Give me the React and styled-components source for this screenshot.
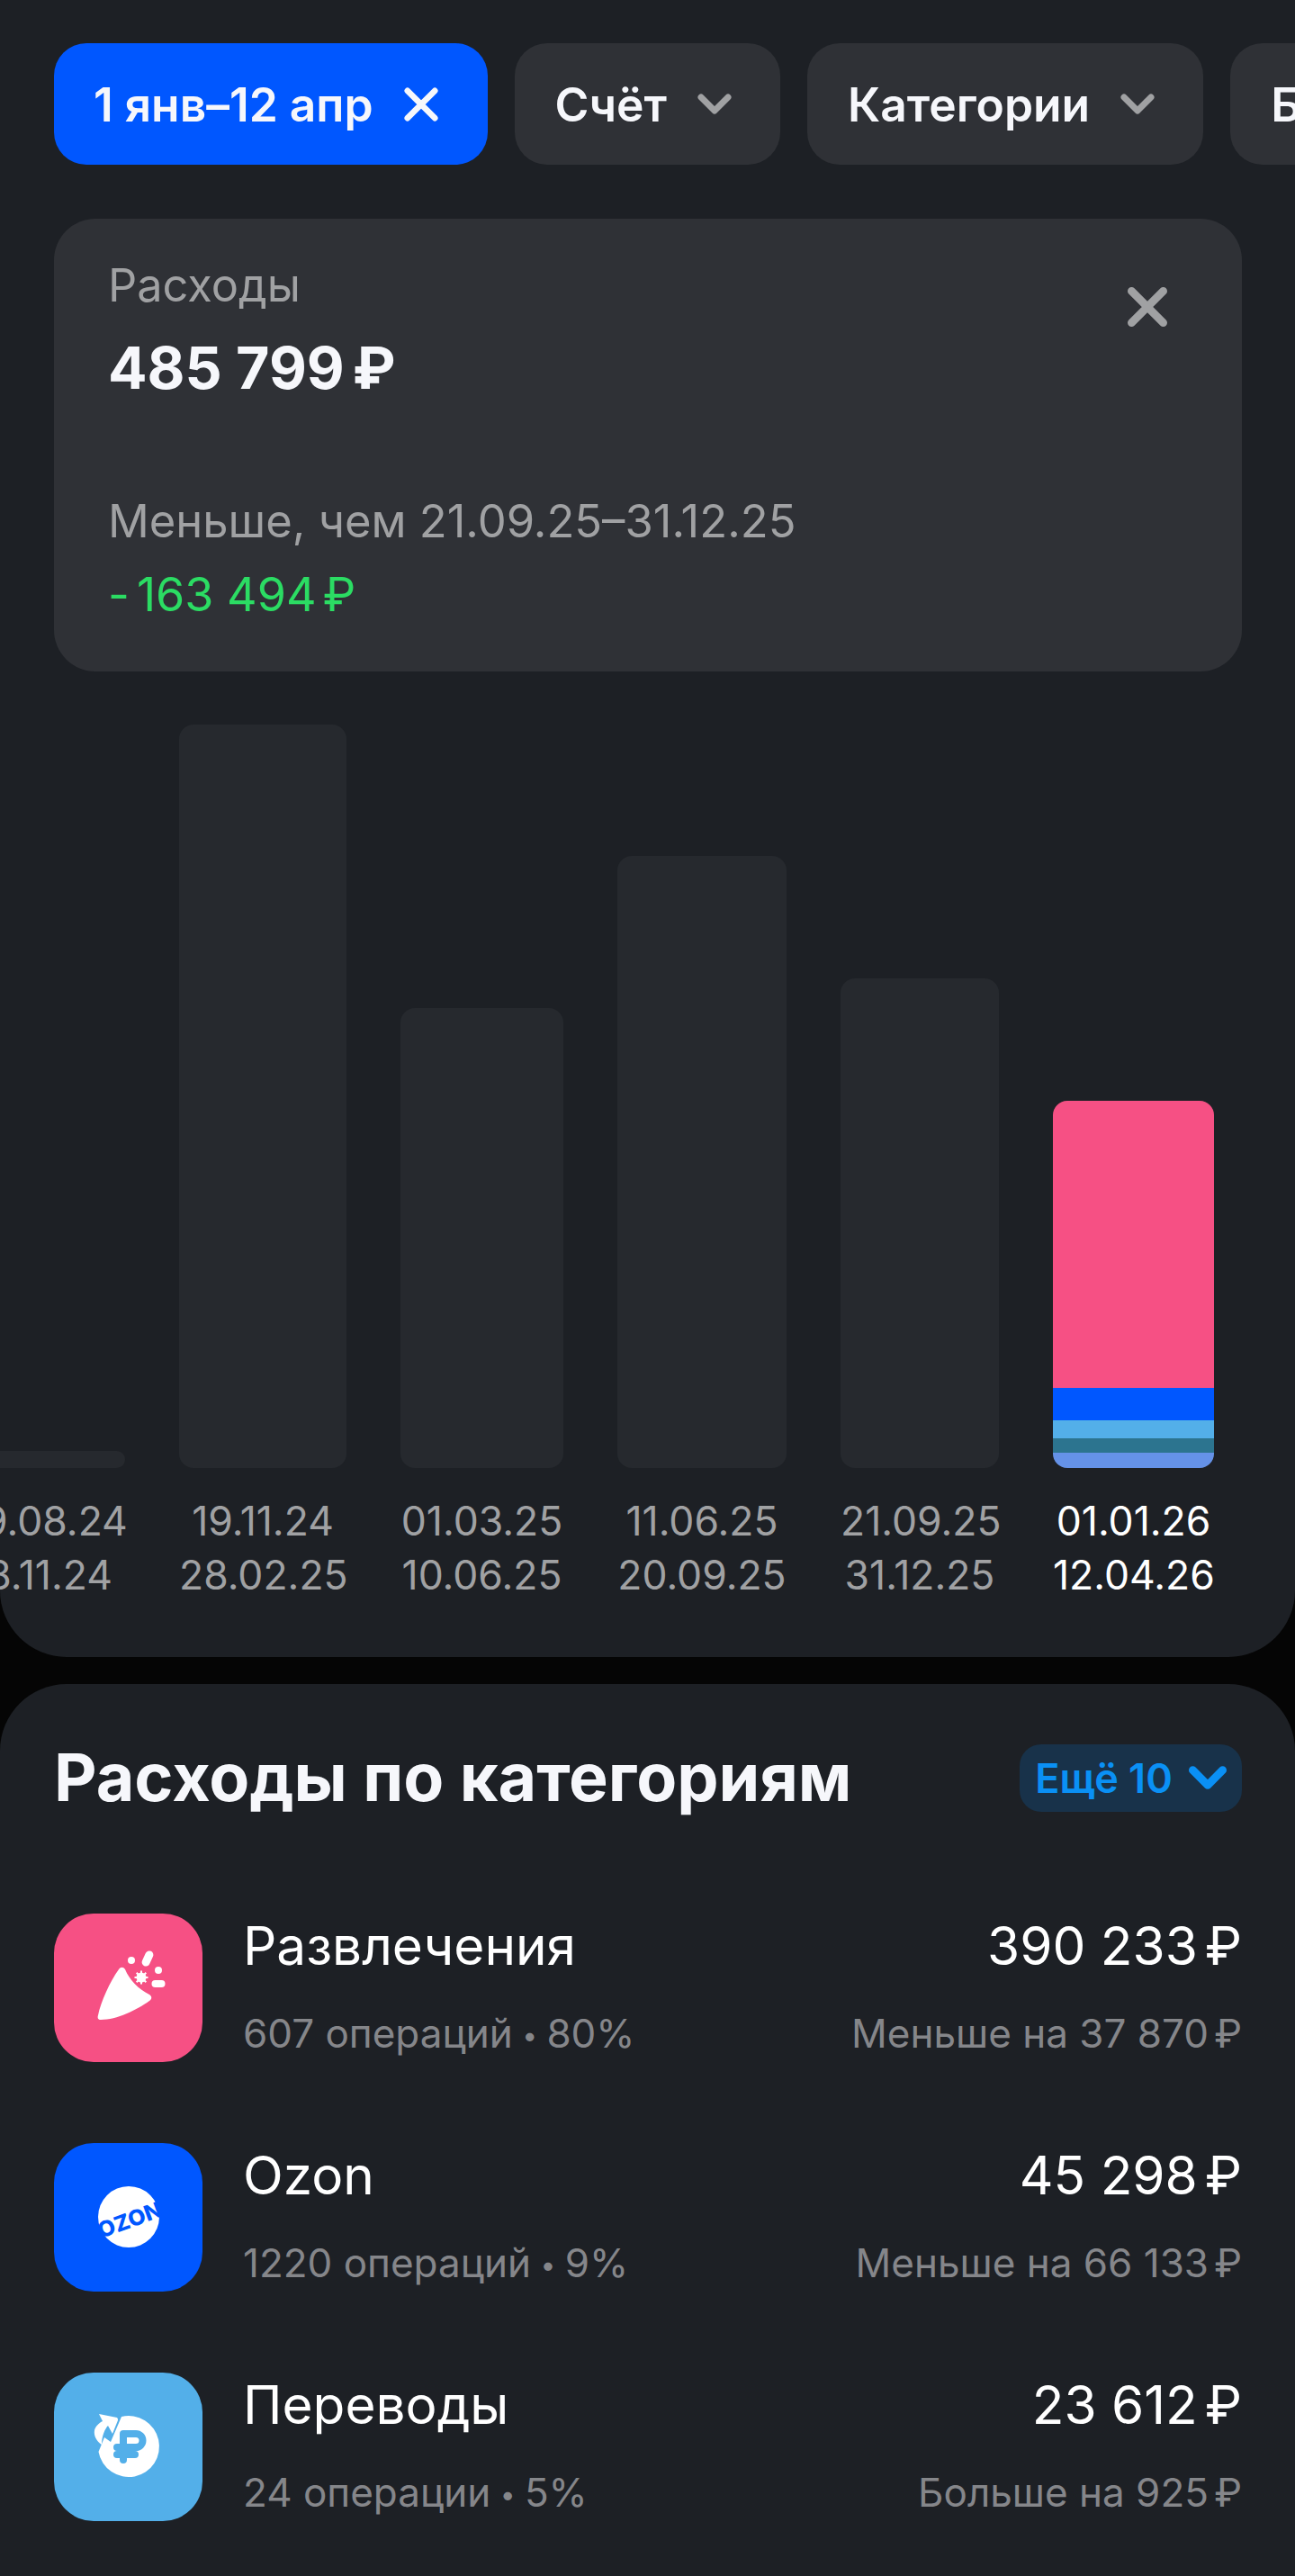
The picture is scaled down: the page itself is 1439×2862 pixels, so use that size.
import React from "react";
import styled, { createGlobalStyle } from "styled-components";

const GlobalStyle = createGlobalStyle`
  html, body {
    margin: 0;
    background: #050505;
  }
  body {
    font-family: Inter, "Noto Sans", sans-serif;
    color: #fff;
  }
`;

const Page = styled.div`
  width: 1439px;
  height: 2862px;
  overflow: hidden;
`;

const TopPanel = styled.section`
  background: #1d2025;
  height: 1841px;
  padding-top: 48px;
  box-sizing: border-box;
  border-radius: 0 0 74px 74px;
`;

const Filters = styled.div`
  display: flex;
  gap: 30px;
  padding-left: 60px;
  overflow: hidden;
`;

const Chip = styled.div`
  flex: none;
  height: 135px;
  box-sizing: border-box;
  padding: 0 ${(p) => (p.$active ? "55px" : "54px")} 0 ${(p) => (p.$active ? "44px" : "45px")};
  display: flex;
  align-items: center;
  gap: 34px;
  border-radius: 36px;
  background: ${(p) => (p.$active ? "#0057ff" : "#2f3136")};
  color: #f6f7fb;
  font-size: 51.5px;
  font-weight: 600;
  white-space: nowrap;
`;

const ExpenseCard = styled.div`
  position: relative;
  margin: 60px 59px 0 60px;
  height: 503px;
  box-sizing: border-box;
  padding: 44px 60px 0;
  background: #2f3136;
  border-radius: 46px;
`;

const CardLabel = styled.div`
  font-size: 50.5px;
  line-height: 60px;
  color: #a0a1a3;
`;

const CardTotal = styled.div`
  margin-top: 22px;
  font-size: 64.5px;
  line-height: 80px;
  font-weight: 700;
  color: #f6f7fb;
`;

const CompareText = styled.div`
  margin-top: 100px;
  font-size: 50.7px;
  line-height: 60px;
  color: #a0a1a3;
`;

const CompareDelta = styled.div`
  margin-top: 22px;
  font-size: 52px;
  line-height: 60px;
  color: #2bdc63;
`;

const DeltaSign = styled.span`
  margin-right: 8px;
`;

const Rub = styled.span`
  margin-left: 0.14em;
`;

const CloseButton = styled.div`
  position: absolute;
  top: 76px;
  right: 83px;
  color: #a0a1a3;
  display: flex;
`;

const Chart = styled.div`
  display: flex;
  justify-content: flex-end;
  gap: 60px;
  padding-right: 90px;
  margin-top: 59px;
  overflow: hidden;
`;

const Column = styled.div`
  flex: none;
  width: ${(p) => p.$width}px;
  display: flex;
  flex-direction: column;
  align-items: stretch;
`;

const BarSlot = styled.div`
  height: 826px;
  display: flex;
  align-items: flex-end;
`;

const Bar = styled.div`
  width: 100%;
  border-radius: 16px;
  overflow: hidden;
  display: flex;
  flex-direction: column;
  background: #26292e;
`;

const Segment = styled.div`
  flex: none;
  background: ${(p) => p.$color};
`;

const DateLabel = styled.div`
  margin-top: 29px;
  font-size: 44.5px;
  line-height: 60px;
  text-align: center;
  white-space: nowrap;
  color: ${(p) => (p.$current ? "#ffffff" : "#a0a1a3")};
`;

const BottomPanel = styled.section`
  margin-top: 30px;
  background: #1d2025;
  height: 991px;
  padding: 0 59px 0 60px;
  border-radius: 74px 74px 0 0;
`;

const SectionHeader = styled.div`
  display: flex;
  justify-content: space-between;
  align-items: center;
  padding-top: 64px;
`;

const SectionTitle = styled.h2`
  margin: 0;
  font-size: 73.5px;
  line-height: 80px;
  font-weight: 700;
  color: #f6f7fb;
`;

const MoreButton = styled.div`
  height: 75px;
  width: 247px;
  box-sizing: border-box;
  display: flex;
  align-items: center;
  justify-content: center;
  gap: 18px;
  border-radius: 24px;
  background: #18324a;
  color: #0a90f5;
  font-size: 45px;
  font-weight: 600;
`;

const Rows = styled.div`
  margin-top: 111px;
  display: flex;
  flex-direction: column;
  gap: 90px;
`;

const Row = styled.div`
  height: 165px;
  display: flex;
  align-items: stretch;
  gap: 45px;
`;

const IconTile = styled.div`
  flex: none;
  width: 165px;
  height: 165px;
  border-radius: 44px;
  background: ${(p) => p.$color};
  display: flex;
  align-items: center;
  justify-content: center;
`;

const RowBody = styled.div`
  flex: 1;
  display: flex;
  justify-content: space-between;
`;

const TextStack = styled.div`
  display: flex;
  flex-direction: column;
  align-items: ${(p) => (p.$right ? "flex-end" : "flex-start")};
`;

const PrimaryLine = styled.div`
  margin-top: 4px;
  font-size: 58.5px;
  line-height: 64px;
  white-space: nowrap;
`;

const SecondaryLine = styled.div`
  margin-top: 37px;
  font-size: 44px;
  line-height: 56px;
  color: #85868a;
  white-space: nowrap;
`;

const Bullet = styled.span`
  font-size: 30px;
  margin: 0 -2px;
  vertical-align: 3px;
`;

const CrossGlyph = ({ size, stroke = 7 }) => (
  <svg width={size} height={size} viewBox="0 0 40 40">
    <path d="M4 4L36 36M36 4L4 36" fill="none" stroke="currentColor" strokeWidth={stroke} strokeLinecap="round" />
  </svg>
);

const ChevronGlyph = ({ width, height, color, stroke = 7 }) => (
  <svg width={width} height={height} viewBox="0 0 38 23" style={{ color }}>
    <path d="M4 4L19 19L34 4" fill="none" stroke="currentColor" strokeWidth={stroke} strokeLinecap="round" strokeLinejoin="round" />
  </svg>
);

const PartyIcon = () => (
  <svg width="165" height="165" viewBox="0 0 165 165">
    <path
      d="M72 62 C74 59 77 59 79 62 C84 74 94 84 106 90 C109 92 109 95 106 97 C92 107 70 118 52 118 C49 118 48 116 49 113 C52 98 62 76 72 62 Z"
      fill="#fff"
    />
    <circle cx="86" cy="52" r="4" fill="#fff" />
    <rect x="99.5" y="41" width="9" height="18" rx="4.5" transform="rotate(25 104 50)" fill="#fff" />
    <circle cx="116" cy="63" r="4" fill="#fff" />
    <rect x="108.5" y="74" width="15" height="8" rx="4" fill="#fff" />
    <circle cx="97" cy="71" r="5.5" fill="#fff" />
    <path d="M97 63.5v15M89.5 71h15M91.7 65.7l10.6 10.6M102.3 65.7l-10.6 10.6" stroke="#fff" strokeWidth="2" />
  </svg>
);

const OzonIcon = () => (
  <svg width="165" height="165" viewBox="0 0 165 165">
    <circle cx="83" cy="82" r="34" fill="#fff" />
    <text
      x="84"
      y="94"
      textAnchor="middle"
      fontFamily="Inter, sans-serif"
      fontWeight="800"
      fontSize="24"
      textLength="74"
      lengthAdjust="spacingAndGlyphs"
      fill="#0057ff"
      transform="rotate(-20 84 85)"
    >
      OZON
    </text>
  </svg>
);

const TransferIcon = () => (
  <svg width="165" height="165" viewBox="0 0 165 165">
    <path d="M75 49 A34 34 0 1 1 49.5 88 L56 72 L63 77 Z" fill="#fff" />
    <path
      d="M50 46 L70 50 C71 51 71 52 71 53 L65 68 L60 59 C57 62 53 70 53 80 C47 76 44 70 45 64 C46 60 50 56 54 54 Z"
      fill="#fff"
    />
    <path
      d="M77 97 V68 H91 A7.5 7.5 0 0 1 91 83 H70 M70 91 H90"
      fill="none"
      stroke="#53afe9"
      strokeWidth="8"
      strokeLinecap="round"
      strokeLinejoin="round"
    />
  </svg>
);

const bars = [
  { width: 186, height: 19, top: "09.08.24", bottom: "18.11.24" },
  { width: 186, height: 826, top: "19.11.24", bottom: "28.02.25" },
  { width: 181, height: 511, top: "01.03.25", bottom: "10.06.25" },
  { width: 188, height: 680, top: "11.06.25", bottom: "20.09.25" },
  { width: 176, height: 544, top: "21.09.25", bottom: "31.12.25" },
];

const currentSegments = [
  { color: "#f65084", height: 319 },
  { color: "#0057ff", height: 36 },
  { color: "#53afe9", height: 20 },
  { color: "#2c748f", height: 16 },
  { color: "#6592e8", height: 17 },
];

const categories = [
  {
    name: "Развлечения",
    count: "607 операций",
    share: "80%",
    total: "390 233",
    diff: "Меньше на 37 870",
    color: "#f65084",
    Icon: PartyIcon,
  },
  {
    name: "Ozon",
    count: "1220 операций",
    share: "9%",
    total: "45 298",
    diff: "Меньше на 66 133",
    color: "#0057ff",
    Icon: OzonIcon,
  },
  {
    name: "Переводы",
    count: "24 операции",
    share: "5%",
    total: "23 612",
    diff: "Больше на 925",
    color: "#53afe9",
    Icon: TransferIcon,
  },
];

export default function App() {
  return (
    <Page>
      <GlobalStyle />
      <TopPanel>
        <Filters>
          <Chip $active>
            1 янв–12 апр
            <CrossGlyph size={38} />
          </Chip>
          <Chip>
            Счёт
            <ChevronGlyph width={38} height={23} color="#a0a1a3" />
          </Chip>
          <Chip>
            Категории
            <ChevronGlyph width={38} height={23} color="#a0a1a3" />
          </Chip>
          <Chip>
            Бренды
            <ChevronGlyph width={38} height={23} color="#a0a1a3" />
          </Chip>
        </Filters>
        <ExpenseCard>
          <CardLabel>Расходы</CardLabel>
          <CardTotal>
            485 799<Rub>₽</Rub>
          </CardTotal>
          <CompareText>Меньше, чем 21.09.25–31.12.25</CompareText>
          <CompareDelta>
            <DeltaSign>-</DeltaSign>163 494<Rub>₽</Rub>
          </CompareDelta>
          <CloseButton>
            <CrossGlyph size={44} stroke={8} />
          </CloseButton>
        </ExpenseCard>
        <Chart>
          {bars.map((bar) => (
            <Column key={bar.top} $width={bar.width}>
              <BarSlot>
                <Bar style={{ height: bar.height }} />
              </BarSlot>
              <DateLabel>
                {bar.top}
                <br />
                {bar.bottom}
              </DateLabel>
            </Column>
          ))}
          <Column $width={179}>
            <BarSlot>
              <Bar>
                {currentSegments.map((segment) => (
                  <Segment key={segment.color} $color={segment.color} style={{ height: segment.height }} />
                ))}
              </Bar>
            </BarSlot>
            <DateLabel $current>
              01.01.26
              <br />
              12.04.26
            </DateLabel>
          </Column>
        </Chart>
      </TopPanel>
      <BottomPanel>
        <SectionHeader>
          <SectionTitle>Расходы по категориям</SectionTitle>
          <MoreButton>
            Ещё 10
            <ChevronGlyph width={42} height={26} color="#0a90f5" stroke={8} />
          </MoreButton>
        </SectionHeader>
        <Rows>
          {categories.map(({ name, count, share, total, diff, color, Icon }) => (
            <Row key={name}>
              <IconTile $color={color}>
                <Icon />
              </IconTile>
              <RowBody>
                <TextStack>
                  <PrimaryLine>{name}</PrimaryLine>
                  <SecondaryLine>
                    {count} <Bullet>•</Bullet> {share}
                  </SecondaryLine>
                </TextStack>
                <TextStack $right>
                  <PrimaryLine>
                    {total}
                    <Rub>₽</Rub>
                  </PrimaryLine>
                  <SecondaryLine>
                    {diff}
                    <Rub>₽</Rub>
                  </SecondaryLine>
                </TextStack>
              </RowBody>
            </Row>
          ))}
        </Rows>
      </BottomPanel>
    </Page>
  );
}
